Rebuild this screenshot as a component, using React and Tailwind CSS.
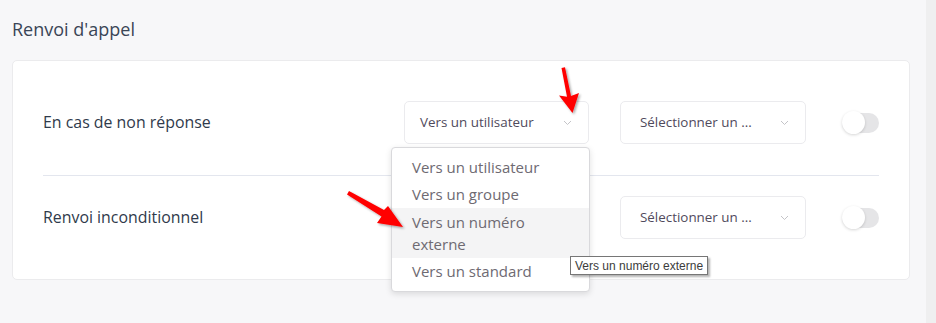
import React from "react";

const font = { fontFamily: "'Open Sans', Lato, sans-serif" };

function Chevron() {
  return (
    <svg width="9" height="6" viewBox="0 0 9 6" className="shrink-0">
      <path d="M1 1 L4.5 4.5 L8 1" fill="none" stroke="#c4c4c8" strokeWidth="1" />
    </svg>
  );
}

function Toggle() {
  return (
    <div className="relative w-[37px] h-[24px] flex items-center ml-[36px]">
      <div className="w-[37px] h-[20px] rounded-full bg-[#e5e5e7]" />
      <div className="absolute left-0 top-[0.5px] w-[23px] h-[23px] rounded-full bg-white shadow-[0_1px_3px_rgba(0,0,0,0.16)]" />
    </div>
  );
}

function Select({ text, w, pl, ml, children }) {
  return (
    <div className={`relative ${ml}`}>
      <div
        className={`${w} h-[43px] border border-[#ebebee] rounded-[5px] bg-white flex items-center justify-between ${pl} pr-[16px]`}
      >
        <span className="text-[13.4px] text-[#504a5c]">{text}</span>
        <Chevron />
      </div>
      {children}
    </div>
  );
}

export default function App() {
  return (
    <div className="relative w-[936px] h-[323px] flex bg-[#f7f7f9] overflow-hidden" style={font}>
      <div className="w-[926px]">
        <div className="h-[60px] pl-[12px] pt-[18px]">
          <h2 className="text-[18px] text-[#3a4556] leading-[22px]">Renvoi d'appel</h2>
        </div>
        <div className="ml-[12px] w-[898px] bg-white border border-[#ebebed] rounded-[5px] px-[30px]">
          <div className="flex items-center pt-[40px] pb-[31px] border-b border-[#e3e6ee]">
            <div className="flex-1 text-[15.9px] text-[#2f3a4b]">En cas de non réponse</div>
            <Select text="Vers un utilisateur" w="w-[185px]" pl="pl-[15px]" ml="">
              <div className="absolute left-[-13px] top-[46px] w-[199px] bg-white border border-[#d9d9dc] rounded-[4px] shadow-[0_2px_6px_rgba(0,0,0,0.12)] py-[6px] z-10 text-[15px] text-[#6e6a72]">
                <div className="h-[27px] flex items-center pl-[20px]">Vers un utilisateur</div>
                <div className="h-[27px] flex items-center pl-[20px]">Vers un groupe</div>
                <div className="h-[50px] flex items-center pl-[20px] bg-[#f4f4f5] leading-[22px]">
                  <span>
                    Vers un numéro
                    <br />
                    externe
                  </span>
                </div>
                <div className="h-[27px] flex items-center pl-[20px]">Vers un standard</div>
              </div>
            </Select>
            <Select text="Sélectionner un ..." w="w-[186px]" pl="pl-[19px]" ml="ml-[31px]" />
            <Toggle />
          </div>
          <div className="flex items-center pt-[20px] pb-[40px]">
            <div className="flex-1 text-[15.9px] text-[#2f3a4b]">Renvoi inconditionnel</div>
            <Select text="Sélectionner un ..." w="w-[186px]" pl="pl-[19px]" ml="ml-[31px]" />
            <Toggle />
          </div>
        </div>
      </div>
      <div className="w-[10px] bg-[#efeff0]" />

      <div
        className="absolute left-[570px] top-[256px] z-20 h-[19px] px-[4px] flex items-center bg-white border border-[#767676] shadow-[2px_2px_2px_rgba(0,0,0,0.3)] text-[12px] text-[#3c3c3c]"
        style={{ fontFamily: "'Liberation Sans', Arial, sans-serif" }}
      >
        Vers un numéro externe
      </div>

      <svg
        className="absolute left-0 top-0 z-30 pointer-events-none"
        width="936"
        height="323"
        viewBox="0 0 936 323"
      >
        <defs>
          <filter id="sh" x="-50%" y="-50%" width="200%" height="200%">
            <feDropShadow dx="1.5" dy="1.5" stdDeviation="1.2" floodColor="#000" floodOpacity="0.35" />
          </filter>
        </defs>
        <g filter="url(#sh)" fill="#ff0000" stroke="none">
          <path d="M561.5 68 L565 67.2 L571 96 L579 93 L572.5 113 L559 95.5 L567 96.8 Z" />
          <path d="M347 194.5 L349 191 L384 210 L388 206 L403 227 L377 223 L381.5 216.5 Z" />
        </g>
      </svg>
    </div>
  );
}
